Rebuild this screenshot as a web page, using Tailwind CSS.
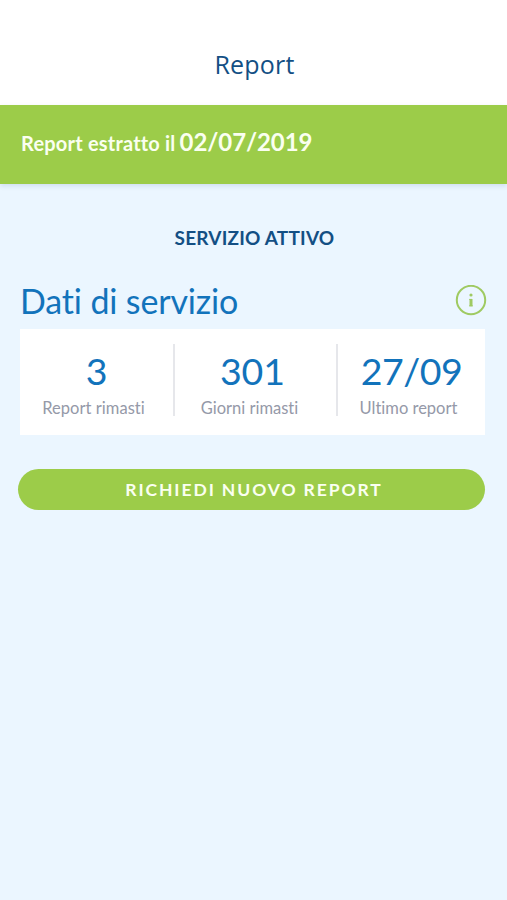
<!DOCTYPE html>
<html lang="it"><head><meta charset="utf-8"><title>Report</title>
<script src="https://cdn.jsdelivr.net/npm/@tailwindcss/browser@4"></script></head>
<body class="h-[900px] overflow-hidden bg-[#ebf6ff] font-['Lato',sans-serif] [font-variant-ligatures:none]">
<header class="h-[105px] bg-white pt-[45px] pl-[2px] text-center font-['Open_Sans',sans-serif] text-[25px] leading-[38px] tracking-[0.2px] text-[#134f84]"><span>Report</span></header>
<section class="h-[79px] bg-[#9ccc49] px-[21px] pt-[20px] text-[20px] leading-[34px] font-bold tracking-[0.2px] text-[#fafff0] shadow-[0_2px_5px_rgba(0,60,120,0.12)]"><span>Report estratto il</span> <span class="-ml-px text-[24px] tracking-[-0.1px]">02/07/2019</span></section>
<main class="px-[20px] pt-[40px]">
<h1 class="pl-[2px] text-center text-[19px] leading-[28px] font-bold tracking-[0.2px] text-[#134f84]"><span>SERVIZIO ATTIVO</span></h1>
<div class="mt-[20px] flex h-[57px] items-center justify-between">
<h2 class="text-[34px] leading-[46px] tracking-[-0.15px] text-[#1273bb]">Dati di servizio</h2>
<svg class="size-[32px]" viewBox="0 0 32 32" fill="none" stroke="#9fca62" stroke-width="2"><circle cx="16" cy="15" r="14.2"/><circle cx="16" cy="10" r="1.6" fill="#9fca62" stroke="none"/><path d="M14.2 14.4H17M14.2 20.8h3.6" stroke-width="1"/><path d="M16 14v7.3" stroke-width="3"/></svg>
</div>
<div class="grid h-[106px] w-[465px] grid-cols-[153px_165px_147px] bg-white py-[15px] text-center">
<div class="h-[72px] pt-[3px]"><p class="text-[37.5px] leading-[48px] text-[#1273bb]">3</p><p class="pr-[6px] text-[16.5px] leading-[27px] tracking-[0.05px] text-[#9599a8]">Report rimasti</p></div>
<div class="h-[72px] border-x-2 border-[#e6e7eb] pt-[3px] pr-[8px]"><p class="pl-[2px] text-[37.5px] leading-[48px] text-[#1273bb]">301</p><p class="pr-[4px] text-[16.5px] leading-[27px] text-[#9599a8]">Giorni rimasti</p></div>
<div class="h-[72px] pt-[3px]"><p class="text-[37.5px] leading-[48px] tracking-[-0.5px] text-[#1273bb]">27/09</p><p class="pr-[6px] text-[16.5px] leading-[27px] text-[#9599a8]">Ultimo report</p></div>
</div>
<button class="mt-[34px] -ml-[2px] h-[41px] w-[467px] rounded-full bg-[#9ccc49] pt-px pl-[5px] text-[17.5px] font-bold tracking-[1.9px] text-[#fafff0]">RICHIEDI NUOVO REPORT</button>
</main></body></html>
